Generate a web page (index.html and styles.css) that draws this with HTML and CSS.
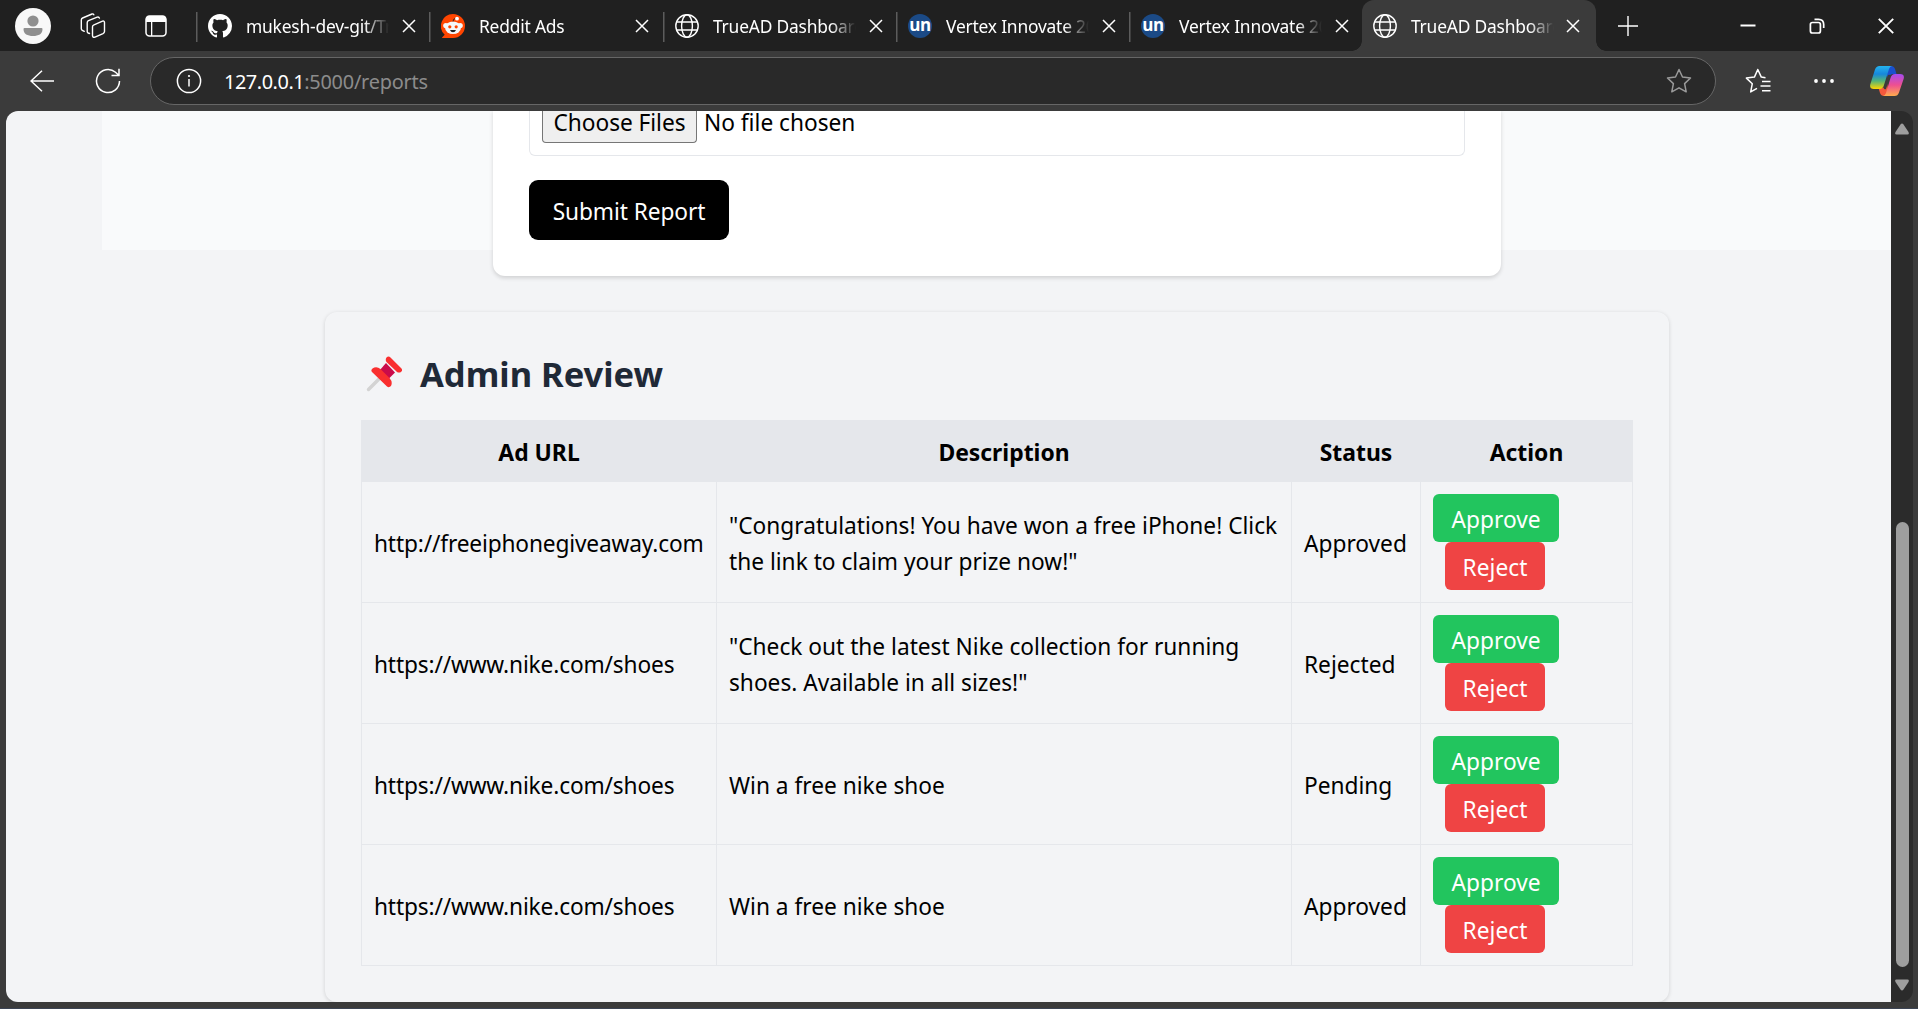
FILE: index.html
```html
<!DOCTYPE html>
<html lang="en">
<head>
<meta charset="utf-8">
<title>TrueAD Dashboard</title>
<link rel="stylesheet" href="styles.css">
</head>
<body>
<svg class="defs" width="0" height="0">
  <symbol id="globe" viewBox="0 0 24 24"><g fill="none" stroke="#fff" stroke-width="1.4"><circle cx="12" cy="12" r="11.2"/><ellipse cx="12" cy="12" rx="5.4" ry="11.2"/><path d="M2 8h20M2 16h20"/></g></symbol>
  <symbol id="cross" viewBox="0 0 14 14"><path d="M1 1l12 12M13 1L1 13" fill="none" stroke="#fff" stroke-width="1.5"/></symbol>
</svg>
<header class="tabstrip">
  <div class="strip-tools">
    <svg class="avatar" viewBox="0 0 36 36"><circle cx="18" cy="18" r="18" fill="#f8f8f8"/><circle cx="18" cy="13" r="5.6" fill="#8f8f8f"/><path d="M9.500 20h17q1 0 1 1c0 5-4 7-9.500 7s-9.500-2-9.500-7q0-1 1-1z" fill="#8f8f8f"/></svg>
    <svg class="spaces" viewBox="0 0 26 26" fill="none" stroke="#fff" stroke-width="1.400" stroke-linejoin="round" stroke-linecap="round"><path d="M14 11.800l8.500-3.600q2-.6 2 1.300v9q0 1.400-1.500 2.100l-8 3.500q-2.500.8-2.500-1.500v-8.800q0-1.400 1.500-2z"/><path d="M9.500 20.500l-1.300-.5q-1-.5-1-1.500V9.800q0-1.500 1.300-2.100l8.700-3.600q1.700-.5 2.200 1"/><path d="M4.300 18.300l-2-1q-1-.5-1-1.600V7q0-1.400 1.300-2l9.400-4q1.300-.4 1.800.8"/></svg>
    <svg class="vtabs" viewBox="0 0 22 22"><rect x="1" y="1" width="20" height="20" rx="3.500" fill="none" stroke="#fff" stroke-width="1.500"/><path d="M1 7V4q0-3 3-3h14q3 0 3 3v3zM6 7h1.300v14H6z" fill="#fff"/></svg>
  </div>
  <nav class="tabs">
    <div class="tab"><svg class="fav" viewBox="0 0 16 16"><path fill="#fff" d="M8 0C3.580 0 0 3.580 0 8c0 3.540 2.290 6.530 5.470 7.590.4.070.55-.17.55-.38 0-.19-.01-.82-.01-1.490-2.010.37-2.530-.49-2.690-.94-.09-.23-.48-.94-.82-1.130-.28-.15-.68-.52-.01-.53.63-.01 1.080.58 1.230.82.72 1.210 1.870.87 2.330.66.070-.52.28-.87.51-1.070-1.780-.2-3.640-.89-3.640-3.950 0-.87.31-1.590.82-2.150-.08-.2-.36-1.020.08-2.120 0 0 .67-.21 2.200.82.64-.18 1.320-.27 2-.27s1.360.09 2 .27c1.530-1.040 2.200-.82 2.200-.82.44 1.100.16 1.920.08 2.120.51.56.82 1.270.82 2.150 0 3.070-1.870 3.750-3.650 3.950.29.25.54.73.54 1.480 0 1.070-.01 1.930-.01 2.200 0 .21.15.46.55.38A8.010 8.010 0 0016 8c0-4.420-3.580-8-8-8z"/></svg><span class="title">mukesh-dev-git/TrueAD</span><svg class="close"><use href="#cross"/></svg></div>
    <div class="tab"><svg class="fav" viewBox="0 0 24 24"><path d="M12 0a12 12 0 1 1 0 24H1.500q-.8 0-.2-.8L3.700 20.700A12 12 0 0 1 12 0z" fill="#ff4500"/><circle cx="4.800" cy="11.500" r="2.600" fill="#f4f8fa"/><circle cx="19.200" cy="11.500" r="2.600" fill="#f4f8fa"/><ellipse cx="12" cy="13.800" rx="8" ry="6.300" fill="#f4f8fa"/><path d="M12 7.500Q12 4.500 15 4.200" fill="none" stroke="#222" stroke-width=".9"/><circle cx="16" cy="4.700" r="1.900" fill="#fff"/><circle cx="8.800" cy="12.800" r="1.600" fill="#ff4500"/><circle cx="15.200" cy="12.800" r="1.600" fill="#ff4500"/><path d="M9 16h6q-.8 2.300-3 2.300T9 16z" fill="#222"/></svg><span class="title">Reddit Ads</span><svg class="close"><use href="#cross"/></svg></div>
    <div class="tab"><svg class="fav"><use href="#globe"/></svg><span class="title">TrueAD Dashboard</span><svg class="close"><use href="#cross"/></svg></div>
    <div class="tab"><span class="fav un">un</span><span class="title">Vertex Innovate 2025</span><svg class="close"><use href="#cross"/></svg></div>
    <div class="tab"><span class="fav un">un</span><span class="title">Vertex Innovate 2025</span><svg class="close"><use href="#cross"/></svg></div>
    <div class="tab active"><svg class="fav"><use href="#globe"/></svg><span class="title">TrueAD Dashboard</span><svg class="close"><use href="#cross"/></svg></div>
  </nav>
  <svg class="newtab" viewBox="0 0 22 22"><path d="M11 1v20M1 11h20" stroke="#fff" stroke-width="1.400"/></svg>
  <div class="window-buttons">
    <svg viewBox="0 0 16 16"><path d="M.5 7.500h15" stroke="#fff" stroke-width="2"/></svg>
    <svg viewBox="0 0 16 16" fill="none" stroke="#fff" stroke-width="1.700"><rect x="1.400" y="4.500" width="10" height="10.500" rx="2"/><path d="M5.500 1.300h4q5.200 0 5.200 5.200v3.500"/></svg>
    <svg viewBox="0 0 16 16"><path d="M.8.8l14.400 14.400M15.200.8L.8 15.200" stroke="#fff" stroke-width="1.900"/></svg>
  </div>
</header>
<div class="toolbar">
  <svg class="back" viewBox="0 0 24 22" fill="none" stroke="#fff" stroke-width="1.500"><path d="M24 11H1M12 .8L1 11l11 10.200"/></svg>
  <svg class="reload" viewBox="0 0 26 26" fill="none" stroke="#fff" stroke-width="1.500"><path d="M24.500 13a11.500 11.500 0 1 1-4-8.700L23.500 7M24 .8V7.500H16.500"/></svg>
  <div class="address">
    <svg class="info" viewBox="0 0 26 26"><circle cx="13" cy="13" r="11.600" fill="none" stroke="#fff" stroke-width="1.500"/><path d="M13 11v7.500" stroke="#fff" stroke-width="1.500"/><circle cx="13" cy="8" r="1.100" fill="#fff"/></svg>
    <span class="url"><b>127.0.0.1</b>:5000/reports</span>
    <svg class="star" viewBox="0 0 26 26" fill="none" stroke="#9a9a9a" stroke-width="1.500" stroke-linejoin="round"><path d="M13 1.500l3.500 7.500 8 1-5.900 5.600 1.600 8.200L13 19.800l-7.200 4 1.600-8.200L1.500 10l8-1z"/></svg>
  </div>
  <svg class="favorites" viewBox="0 0 26 26" fill="none" stroke="#fff" stroke-width="1.500" stroke-linejoin="round"><path d="M20.500 9.700l-4.200-.6L12.800 1.500 9.400 9.100l-8 1 5.900 5.600-1.600 8.200 6.300-3.600M17 13.500h8.500M15.500 18h10M17 22.700h8.500"/></svg>
  <svg class="more" viewBox="0 0 20 4" fill="#fff"><circle cx="2" cy="2" r="1.900"/><circle cx="10" cy="2" r="1.900"/><circle cx="18" cy="2" r="1.900"/></svg>
  <svg class="copilot" viewBox="0 0 34 32">
    <defs>
      <linearGradient id="ca" x1="0" y1="0" x2="0" y2="1"><stop offset="0" stop-color="#25b4f0"/><stop offset=".35" stop-color="#1687dc"/><stop offset=".65" stop-color="#53b478"/><stop offset="1" stop-color="#ffd500"/></linearGradient>
      <linearGradient id="cb" x1="0" y1="0" x2="0" y2="1"><stop offset="0" stop-color="#a64bf0"/><stop offset=".5" stop-color="#ee4f91"/><stop offset="1" stop-color="#ffac4d"/></linearGradient>
    </defs>
    <path d="M15 1h6q3 0 4 3l1.500 5H23q-3 0-4 3l-1 3z" fill="#1a50cf"/>
    <path d="M19 31h-5q-3 0-4-3l-1.500-5H12q3 0 4-3l1-3z" fill="#f4593c"/>
    <path d="M9.500 1H22q-2 0-3 3l-5 16q-1 4-4.500 4H4q-5 0-3.600-5L5 4.500Q6.200 1 9.500 1z" fill="url(#ca)"/>
    <path d="M24.500 31H13q2 0 3-3l4.500-15q1.200-4 4.500-4h5q5 0 3.600 5L29 27.500q-1.200 3.500-4.500 3.500z" fill="url(#cb)"/>
    <path d="M19 11l-4 12" stroke="#3b3b3b" stroke-width="2.500" stroke-linecap="round"/>
  </svg>
</div>
<div class="viewport">
  <main class="page">
    <section class="hero">
      <form class="report-card">
        <div class="file-field"><span class="choose">Choose Files</span><span class="chosen">No file chosen</span></div>
        <button class="submit" type="button">Submit Report</button>
      </form>
    </section>
    <section class="admin">
      <h2><svg class="pin" viewBox="0 0 36 36"><path d="M2.500 33.500L15 21" stroke="#d3d3d3" stroke-width="3.400" stroke-linecap="round"/><path d="M13.500 14.500L20 7l9 9.500-6.500 6.500z" fill="#ca0b4a"/><path d="M20.500 1.500q2-2 4 0l11 11q1.500 2-.5 3.500-2 1-4 0L20.500 6q-1.500-2.500 0-4.500zM6 16q-1.500-2 .5-3.500 4-2.500 8 .5l9 9q3.500 4 1.500 8-2 2-4 .5z" fill="#f92f2f"/></svg><span>Admin Review</span></h2>
      <table>
        <colgroup><col class="c-url"><col class="c-desc"><col class="c-status"><col class="c-action"></colgroup>
        <thead><tr><th>Ad URL</th><th>Description</th><th>Status</th><th>Action</th></tr></thead>
        <tbody>
          <tr><td class="link">http://freeiphonegiveaway.com</td><td>"Congratulations! You have won a free iPhone! Click<br>the link to claim your prize now!"</td><td>Approved</td><td><button class="ok">Approve</button><button class="no">Reject</button></td></tr>
          <tr><td class="link">https://www.nike.com/shoes</td><td>"Check out the latest Nike collection for running<br>shoes. Available in all sizes!"</td><td>Rejected</td><td><button class="ok">Approve</button><button class="no">Reject</button></td></tr>
          <tr><td class="link">https://www.nike.com/shoes</td><td>Win a free nike shoe</td><td>Pending</td><td><button class="ok">Approve</button><button class="no">Reject</button></td></tr>
          <tr><td class="link">https://www.nike.com/shoes</td><td>Win a free nike shoe</td><td>Approved</td><td><button class="ok">Approve</button><button class="no">Reject</button></td></tr>
        </tbody>
      </table>
    </section>
  </main>
  <aside class="scrollbar">
    <svg viewBox="0 0 14 12"><path d="M5.500 1.500q1.500-2 3 0l5 7.500q1 2.500-1 2.500h-11q-2 0-1-2.500z" fill="#9e9e9e"/></svg>
    <div class="thumb"></div>
    <svg viewBox="0 0 14 12"><path d="M5.500 10.500q1.500 2 3 0l5-7.500q1-2.500-1-2.500h-11q-2 0-1 2.500z" fill="#9e9e9e"/></svg>
  </aside>
</div>
</body>
</html>
```
FILE: styles.css
```css
* { box-sizing: border-box; }
body { margin: 0; width: 1918px; height: 1009px; overflow: hidden; display: flex; flex-direction: column; background: #3b3b3b; font-family: "Noto Sans", sans-serif; border-bottom: 1px solid #3c4454; }
svg { display: block; flex: none; }
.defs { position: absolute; }
button { font: inherit; letter-spacing: inherit; border: 0; padding: 0; display: block; }

.tabstrip { height: 51px; flex: none; background: #202020; display: flex; align-items: center; }
.strip-tools { width: 196px; flex: none; display: flex; align-items: center; padding-left: 15px; }
.avatar { width: 36px; height: 36px; }
.spaces { width: 26px; height: 26px; margin-left: 29px; }
.vtabs { width: 22px; height: 22px; margin-left: 39px; }
.tabs { display: flex; align-self: stretch; width: 1400px; flex: none; }
.tab { width: 233px; flex: none; display: flex; align-items: center; padding: 0 0 0 12px; background: linear-gradient(#5c5c5c, #5c5c5c) 0 12px / 1.500px 30px no-repeat; }
.tab:nth-child(2) { width: 234px; }
.tab.active { position: relative; width: 234px; background: #3b3b3b; border-radius: 12px 12px 0 0; padding-left: 11px; }
.tab.active::before, .tab.active::after { content: ""; position: absolute; bottom: 0; width: 10px; height: 10px; }
.tab.active::before { left: -10px; background: radial-gradient(circle at 0 0, transparent 9.500px, #3b3b3b 10px); }
.tab.active::after { right: -10px; background: radial-gradient(circle at 100% 0, transparent 9.500px, #3b3b3b 10px); }
.fav { width: 24px; height: 24px; flex: none; }
.un { border-radius: 50%; background: #1b4a86; color: #fff; font: 700 17px/21px "Open Sans", sans-serif; text-align: center; letter-spacing: -.3px; }
.title { width: 143px; margin-left: 14px; height: 28px; flex: none; overflow: hidden; white-space: nowrap; color: #fff; font-size: 17.400px; line-height: 28px; letter-spacing: -.2px; -webkit-mask-image: linear-gradient(90deg, #000 118px, transparent 143px); mask-image: linear-gradient(90deg, #000 118px, transparent 143px); }
.close { width: 14px; height: 14px; margin-left: 13px; }
.active .close { margin-left: 12px; }
.newtab { width: 22px; height: 22px; margin-left: 21px; }
.window-buttons { display: flex; gap: 53px; margin-left: 101px; }
.window-buttons svg { width: 16px; height: 16px; }

.toolbar { height: 60px; flex: none; display: flex; align-items: center; padding-left: 30px; background: #3b3b3b; }
.back { width: 24px; height: 22px; }
.reload { width: 26px; height: 26px; margin-left: 41px; }
.address { width: 1566px; height: 48px; margin-left: 29px; flex: none; border: 1.500px solid #666; border-radius: 24px; background: #292929; display: flex; align-items: center; padding-left: 25px; }
.info { width: 26px; height: 26px; }
.url { flex: 1; margin-left: 22px; color: #8c8c8c; font-size: 19.900px; letter-spacing: -.23px; }
.url b { font-weight: 400; color: #fff; letter-spacing: -.45px; }
.star { width: 26px; height: 26px; margin-right: 23px; }
.favorites { width: 26px; height: 26px; margin-left: 29px; }
.more { width: 20px; height: 4px; margin-left: 43px; }
.copilot { width: 34px; height: 32px; margin-left: 36px; }

.viewport { height: 891px; width: 1907px; margin-left: 6px; flex: none; display: flex; border-radius: 12px; overflow: hidden; background: #2b2b2b; }
.page { width: 1885px; height: 891px; flex: none; background: #f3f4f6; font-size: 22.700px; line-height: 36px; overflow: hidden; }
.hero { height: 139px; margin-left: 96px; background: #f9fafb; display: flex; }
.report-card { width: 1008px; height: 165px; flex: none; margin-left: 391px; padding: 0 36px; background: #fff; border-radius: 0 0 12px 12px; box-shadow: 0 1.500px 4px rgba(0,0,0,.15); }
.file-field { height: 45px; border: 1px solid #e5e7eb; border-top: 0; border-radius: 0 0 6px 6px; padding-left: 12px; display: flex; gap: 7px; line-height: 23px; }
.choose { width: 155px; height: 32px; background: #efefef; border: 1px solid #767676; border-top: 0; border-radius: 0 0 4px 4px; text-align: center; white-space: nowrap; letter-spacing: -.05px; }
.submit { width: 200px; height: 60px; margin-top: 24px; background: #000; color: #fff; border-radius: 9px; padding-top: 3px; letter-spacing: -.08px; }
.admin { width: 1344px; height: 690px; margin: 62px 0 0 319px; padding: 36px; border-radius: 12px; box-shadow: 0 1px 4px rgba(0,0,0,.14); }
h2 { margin: 0 0 24px; height: 48px; display: flex; align-items: center; font-size: 34.500px; color: #1f2937; }
h2 span { padding-top: 3px; }
.pin { width: 36px; height: 36px; margin: 3px 18px 0 5px; }
table { width: 1271px; table-layout: fixed; border-collapse: collapse; }
.c-url { width: 355px; } .c-desc { width: 575px; } .c-status { width: 129px; } .c-action { width: 212px; }
th { height: 61px; padding: 3px 0 0; background: #e5e7eb; border: 1px solid #e5e7eb; font-size: 22.900px; }
td { height: 121px; border: 1px solid #e5e7eb; padding: 4px 0 0 12px; white-space: nowrap; }
.link { letter-spacing: -.15px; }
td:last-child { padding: 0 12px; }
.ok, .no { height: 48px; border-radius: 6px; color: #fff; padding-top: 3px; letter-spacing: .03px; }
.ok { width: 126px; background: #22c55e; }
.no { width: 100px; margin-left: 12px; background: #ef4444; }
.scrollbar { width: 22px; padding: 12px 0 11px; display: flex; flex-direction: column; align-items: center; }
.scrollbar svg { width: 14px; height: 12px; }
.thumb { width: 13px; height: 445px; border-radius: 7px; background: #9e9e9e; margin: auto 0 12px; }
```
